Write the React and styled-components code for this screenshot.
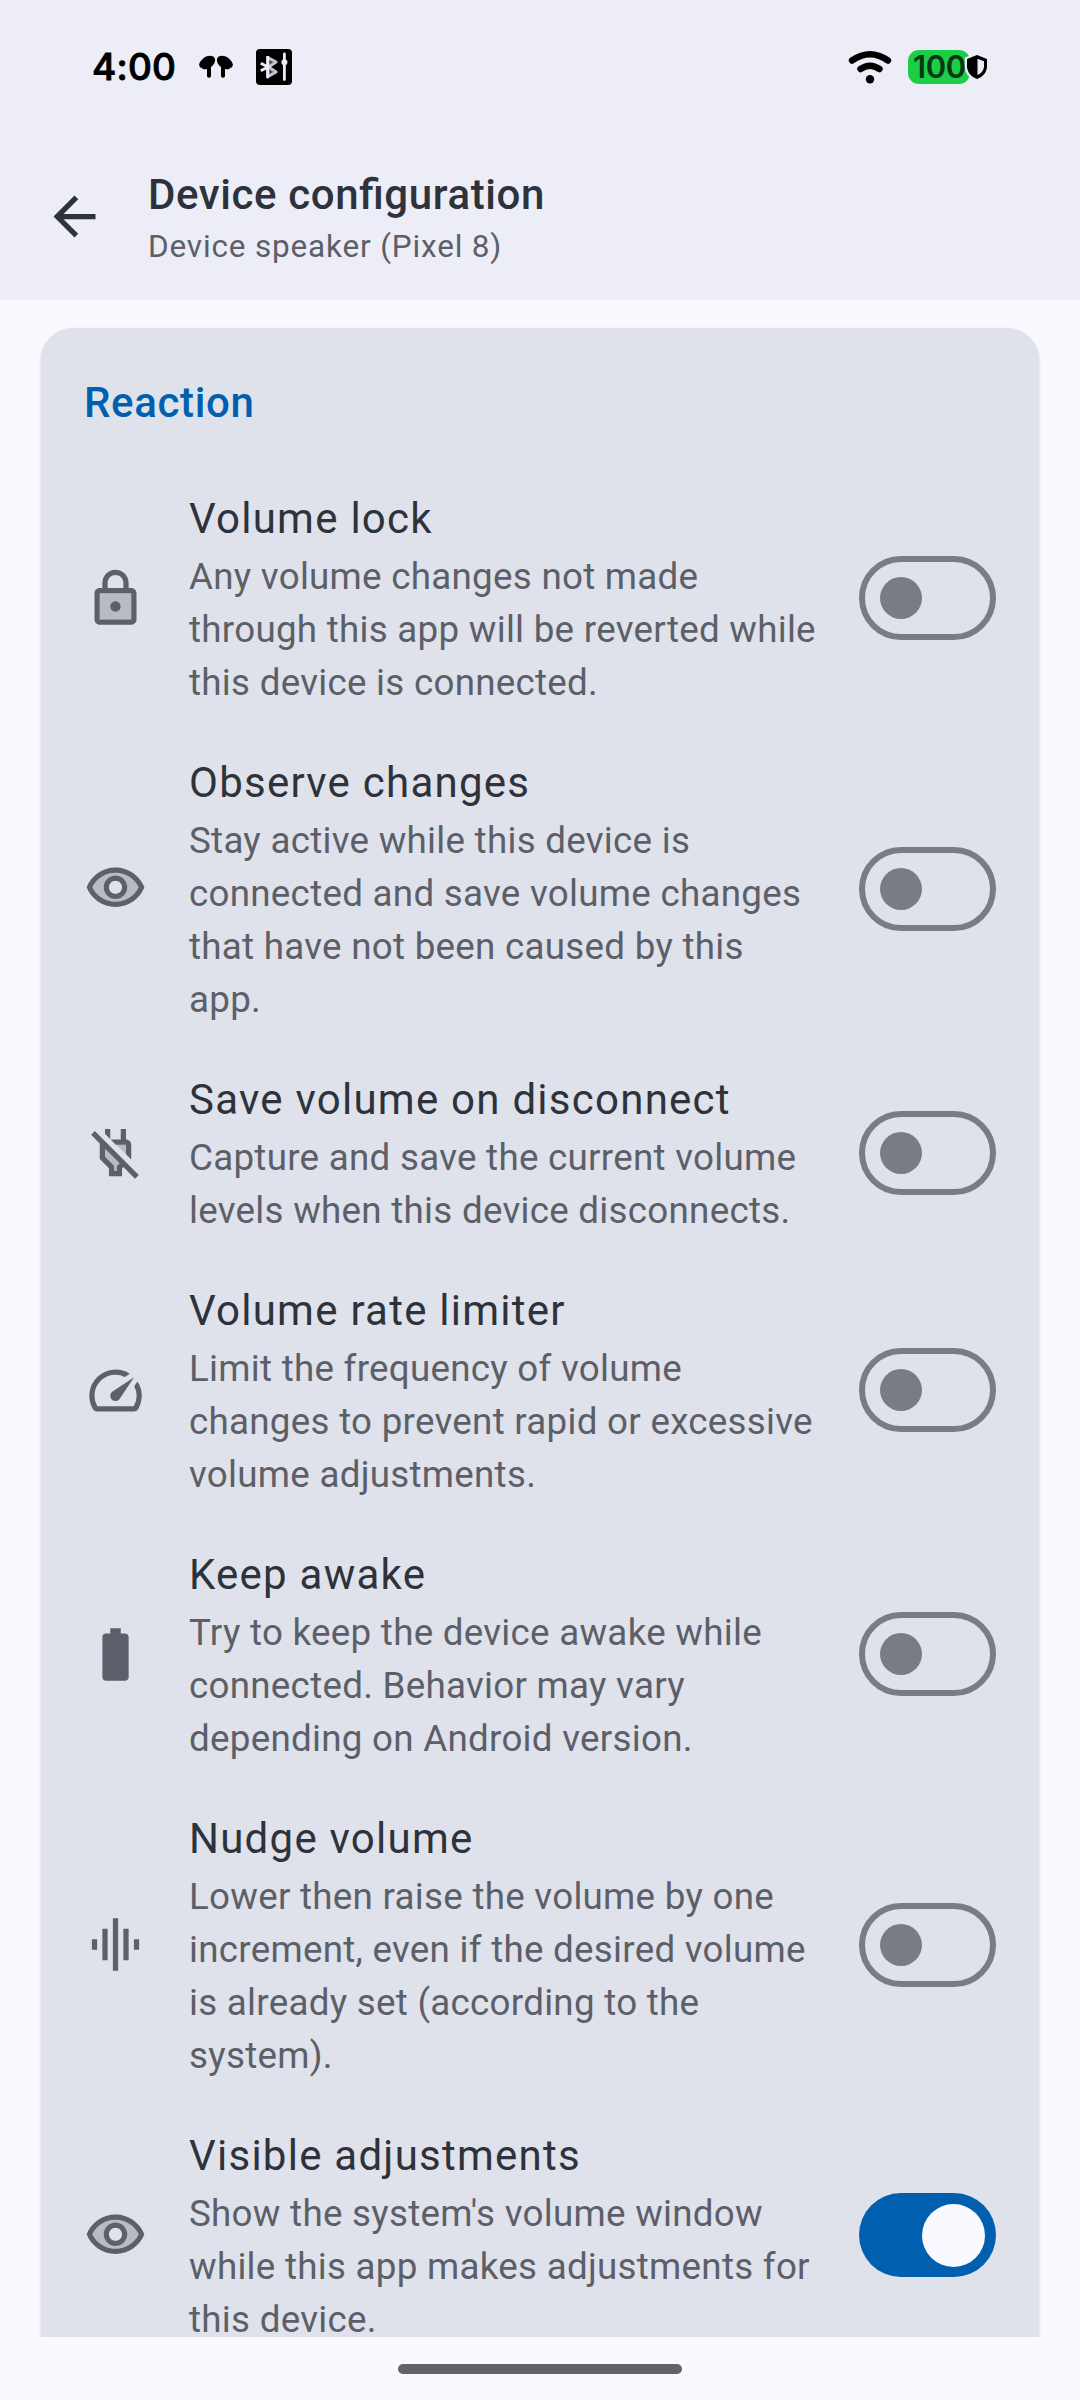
import React from "react";
import styled, { createGlobalStyle } from "styled-components";

const Global = createGlobalStyle`
  html, body { margin: 0; padding: 0; }
  body { background: #f9f9ff; font-family: Roboto, "Noto Sans", sans-serif; -webkit-font-smoothing: antialiased; }
  * { box-sizing: border-box; }
`;

const Screen = styled.div`
  width: 1080px;
  height: 2400px;
  display: flex;
  flex-direction: column;
  overflow: hidden;
  background: #f9f9ff;
`;

const Header = styled.header`
  flex: none;
  height: 300px;
  background: #ecedf6;
`;

const StatusBar = styled.div`
  height: 132px;
  padding: 2px 91px 0 92px;
  display: flex;
  align-items: center;
  justify-content: space-between;
`;

const StatusGroup = styled.div`
  display: flex;
  align-items: center;
`;

const Clock = styled.span`
  font-family: Inter, sans-serif;
  font-weight: 500;
  font-size: 37px;
  line-height: 44px;
  width: 84px;
  letter-spacing: 0.2px;
  white-space: nowrap;
  color: #000;
  -webkit-text-stroke: 0.9px #000;
`;

const StatusIcon = styled.svg`
  display: block;
  flex: none;
  margin-left: ${(p) => p.$gap || 0}px;
`;

const Battery = styled.div`
  position: relative;
  margin-left: 16px;
  width: 81px;
  height: 34px;
  display: flex;
`;

const BatteryFill = styled.div`
  width: 62px;
  height: 34px;
  border-radius: 11px;
  background: #1ccd46;
  display: flex;
  align-items: center;
  padding-left: 5px;
  font-family: Inter, sans-serif;
  font-weight: 600;
  font-size: 31px;
  line-height: 34px;
  letter-spacing: -0.4px;
  color: #073614;
`;

const Shield = styled.svg`
  position: absolute;
  right: -1px;
  top: 2px;
`;

const AppBar = styled.div`
  height: 168px;
  padding-left: 43px;
  display: flex;
  align-items: center;
`;

const BackButton = styled.button`
  border: 0;
  padding: 0;
  background: none;
  width: 63px;
  height: 63px;
  margin-right: 42px;
  color: #2e323b;
`;

const Titles = styled.div`
  display: flex;
  flex-direction: column;
  padding-bottom: 1px;
`;

const Title = styled.h1`
  margin: 0;
  font-size: 42px;
  font-weight: 500;
  line-height: 63px;
  letter-spacing: 0.6px;
  font-feature-settings: "liga" 1;
  color: #2e323b;
`;

const Subtitle = styled.div`
  font-size: 31.5px;
  line-height: 42px;
  letter-spacing: 0.83px;
  color: #5c5f68;
`;

const Content = styled.main`
  flex: 1;
  min-height: 0;
  overflow: hidden;
  padding: 28px 41px 0;
`;

const Card = styled.section`
  height: 2200px;
  padding: 43px 43px 0;
  border-radius: 32px;
  background: #dfe2eb;
  box-shadow: 0 1px 3px rgba(0, 0, 0, 0.14);
`;

const SectionTitle = styled.h2`
  margin: 0 0 32px;
  font-size: 42px;
  font-weight: 500;
  line-height: 63px;
  letter-spacing: 0.65px;
  color: #005faf;
`;

const Row = styled.div`
  display: flex;
  align-items: center;
  padding: 21px 0;
`;

const Glyph = styled.svg`
  display: block;
  width: 63px;
  height: 63px;
  flex: none;
  fill: #5c606a;
`;

const RowText = styled.div`
  width: 628px;
  margin: 0 42px;
  flex: none;
`;

const RowTitle = styled.div`
  font-size: 42px;
  line-height: 63px;
  letter-spacing: 1.25px;
  color: #2e323b;
`;

const RowDescription = styled.div`
  font-size: 36.75px;
  line-height: 53px;
  letter-spacing: 0.27px;
  white-space: nowrap;
  color: #5c5f68;
`;

const Track = styled.div`
  flex: none;
  width: 137px;
  height: 84px;
  border-radius: 42px;
  display: flex;
  align-items: center;
  justify-content: ${(p) => (p.$on ? "flex-end" : "flex-start")};
  padding: ${(p) => (p.$on ? "0 11px 0 0" : "0 0 0 15px")};
  border: ${(p) => (p.$on ? "0" : "6px solid #797c84")};
  background: ${(p) => (p.$on ? "#005faf" : "transparent")};
`;

const Thumb = styled.div`
  width: ${(p) => (p.$on ? 63 : 42)}px;
  height: ${(p) => (p.$on ? 63 : 42)}px;
  border-radius: 50%;
  background: ${(p) => (p.$on ? "#f9f9ff" : "#797c84")};
`;

const NavBar = styled.div`
  flex: none;
  height: 63px;
  display: flex;
  align-items: center;
  justify-content: center;
`;

const NavHandle = styled.div`
  width: 284px;
  height: 10px;
  border-radius: 5px;
  background: #646466;
`;

const icons = {
  lock: (
    <>
      <path opacity=".3" d="M6 20h12V10H6v10zm6-7c1.1 0 2 .9 2 2s-.9 2-2 2-2-.9-2-2 .9-2 2-2z" />
      <path d="M18 8h-1V6c0-2.76-2.24-5-5-5S7 3.24 7 6v2H6c-1.1 0-2 .9-2 2v10c0 1.1.9 2 2 2h12c1.1 0 2-.9 2-2V10c0-1.1-.9-2-2-2zM9 6c0-1.66 1.34-3 3-3s3 1.34 3 3v2H9V6zm9 14H6V10h12v10zm-6-3c1.1 0 2-.9 2-2s-.9-2-2-2-2 .9-2 2 .9 2 2 2z" />
    </>
  ),
  eye: (
    <>
      <path opacity=".3" d="M12 6c-3.79 0-7.17 2.13-8.82 5.5C4.83 14.87 8.21 17 12 17s7.17-2.13 8.82-5.5C19.17 8.13 15.79 6 12 6zm0 10c-2.48 0-4.5-2.02-4.5-4.5S9.52 7 12 7s4.5 2.02 4.5 4.5S14.48 16 12 16z" />
      <path d="M12 4C7 4 2.73 7.11 1 11.5 2.73 15.89 7 19 12 19s9.27-3.11 11-7.5C21.27 7.11 17 4 12 4zm0 13c-3.79 0-7.17-2.13-8.82-5.5C4.83 8.13 8.21 6 12 6s7.17 2.13 8.82 5.5C19.17 14.87 15.79 17 12 17zm0-10c-2.48 0-4.5 2.02-4.5 4.5S9.52 16 12 16s4.5-2.02 4.5-4.5S14.48 7 12 7zm0 7c-1.38 0-2.5-1.12-2.5-2.5S10.62 9 12 9s2.5 1.12 2.5 2.5S13.38 14 12 14z" />
    </>
  ),
  powerOff: (
    <>
      <path opacity=".3" d="M8 13.65l3.5 3.52V19h1v-1.83l1.07-1.06L8 10.54zM16 9h-3.66L16 12.66z" />
      <path d="M16 9v3.66l2 2V9c0-1.1-.9-2-2-2V3h-2v4h-4V3H8v1.88L12.12 9H16zM4.12 3.84L2.71 5.25 6 8.54v5.96L9.5 18v3h5v-3l.48-.48 4.47 4.47 1.41-1.41L4.12 3.84zm8.38 13.33V19h-1v-1.83L8 13.65v-3.11l5.57 5.57-1.07 1.06z" />
    </>
  ),
  speed: (
    <path d="M20.38 8.57l-1.23 1.85a8 8 0 0 1-.22 7.58H5.07A8 8 0 0 1 15.58 6.85l1.85-1.23A10 10 0 0 0 3.35 19a2 2 0 0 0 1.72 1h13.85a2 2 0 0 0 1.74-1 10 10 0 0 0-.27-10.44zM10.59 15.41a2 2 0 0 0 2.83 0l5.66-8.49-8.49 5.66a2 2 0 0 0 0 2.83z" />
  ),
  battery: (
    <path d="M15.67 4H14V2h-4v2H8.33C7.6 4 7 4.6 7 5.33v15.33C7 21.4 7.6 22 8.33 22h7.33c.74 0 1.34-.6 1.34-1.33V5.33C17 4.6 16.4 4 15.67 4z" />
  ),
  equalizer: <path d="M7 18h2V6H7v12zm4 4h2V2h-2v20zm-8-8h2v-4H3v4zm12 4h2V6h-2v12zm4-8v4h2v-4h-2z" />,
};

const settings = [
  { icon: "lock", title: "Volume lock", lines: ["Any volume changes not made", "through this app will be reverted while", "this device is connected."] },
  { icon: "eye", title: "Observe changes", lines: ["Stay active while this device is", "connected and save volume changes", "that have not been caused by this", "app."] },
  { icon: "powerOff", title: "Save volume on disconnect", lines: ["Capture and save the current volume", "levels when this device disconnects."] },
  { icon: "speed", title: "Volume rate limiter", lines: ["Limit the frequency of volume", "changes to prevent rapid or excessive", "volume adjustments."] },
  { icon: "battery", title: "Keep awake", lines: ["Try to keep the device awake while", "connected. Behavior may vary", "depending on Android version."] },
  { icon: "equalizer", title: "Nudge volume", lines: ["Lower then raise the volume by one", "increment, even if the desired volume", "is already set (according to the", "system)."] },
  { icon: "eye", title: "Visible adjustments", on: true, lines: ["Show the system's volume window", "while this app makes adjustments for", "this device."] },
];

function Setting({ icon, title, lines, on }) {
  return (
    <Row>
      <Glyph viewBox="0 0 24 24">{icons[icon]}</Glyph>
      <RowText>
        <RowTitle>{title}</RowTitle>
        <RowDescription>
          {lines.map((line) => (
            <div key={line}>{line}</div>
          ))}
        </RowDescription>
      </RowText>
      <Track $on={on} role="switch" aria-checked={!!on}>
        <Thumb $on={on} />
      </Track>
    </Row>
  );
}

const BUD = "M.3 10.5C-.5 8.5 2 5.5 5 2.8 8 .2 14-.2 15.6 3 17 6 15.5 9.6 12 12V21Q12 22.8 10 22.8T8 21V14C6 14.6 4 14.6 3 13 1.5 12.8.6 12 .3 10.5Z";

export default function App() {
  return (
    <Screen>
      <Global />
      <Header>
        <StatusBar>
          <StatusGroup>
            <Clock>4:00</Clock>
            <StatusIcon $gap={23} width="34" height="24" viewBox="0 0 34 24">
              <path d={BUD} />
              <path d={BUD} transform="translate(34 0) scale(-1 1)" />
            </StatusIcon>
            <StatusIcon $gap={23} width="36" height="36" viewBox="0 0 36 36">
              <rect width="36" height="36" rx="4" fill="#000" />
              <path d="M11.6 18V8.5L20.2 13 12.5 18 20.2 23 11.6 27.8V18" fill="#4a4a4e" stroke="#c4c4cb" strokeWidth="2.8" strokeLinejoin="round" />
              <path d="M4.8 14.2 12 18 4.8 21.8M11.8 7V29.2" fill="none" stroke="#ecedf6" strokeWidth="2.9" />
              <path d="M28.4 5V30.5" stroke="#ecedf6" strokeWidth="2.8" strokeLinecap="round" />
              <circle cx="28.4" cy="13.2" r="3" fill="#ecedf6" />
            </StatusIcon>
          </StatusGroup>
          <StatusGroup>
            <StatusIcon width="44" height="34" viewBox="0 0 44 34">
              <g fill="none" stroke="#000" strokeWidth="6.4" strokeLinecap="round">
                <path d="M4 10.5Q22 -2 40 10.5" />
                <path d="M12.5 19Q22 12.5 31.5 19" />
              </g>
              <circle cx="22" cy="29.3" r="4.2" fill="#000" />
            </StatusIcon>
            <Battery>
              <BatteryFill>100</BatteryFill>
              <Shield width="26" height="30" viewBox="0 0 26 30">
                <path d="M13 3 23 7V14C23 20 19 24.8 13 27 7 24.8 3 20 3 14V7Z" fill="#000" stroke="#ecedf6" strokeWidth="4.5" strokeLinejoin="round" />
                <path d="M13 3 23 7V14C23 20 19 24.8 13 27 7 24.8 3 20 3 14V7Z" fill="#000" />
                <path d="M13.5 6.8 20 9.3V14C20 18 17.5 21.2 13.5 23Z" fill="#ecedf6" />
              </Shield>
            </Battery>
          </StatusGroup>
        </StatusBar>
        <AppBar>
          <BackButton aria-label="Back">
            <svg width="63" height="63" viewBox="0 0 24 24" fill="currentColor">
              <path d="M20 11H7.83l5.59-5.59L12 4l-8 8 8 8 1.41-1.41L7.83 13H20v-2z" />
            </svg>
          </BackButton>
          <Titles>
            <Title>Device configuration</Title>
            <Subtitle>Device speaker (Pixel 8)</Subtitle>
          </Titles>
        </AppBar>
      </Header>
      <Content>
        <Card>
          <SectionTitle>Reaction</SectionTitle>
          {settings.map((s) => (
            <Setting key={s.title} {...s} />
          ))}
        </Card>
      </Content>
      <NavBar>
        <NavHandle />
      </NavBar>
    </Screen>
  );
}
